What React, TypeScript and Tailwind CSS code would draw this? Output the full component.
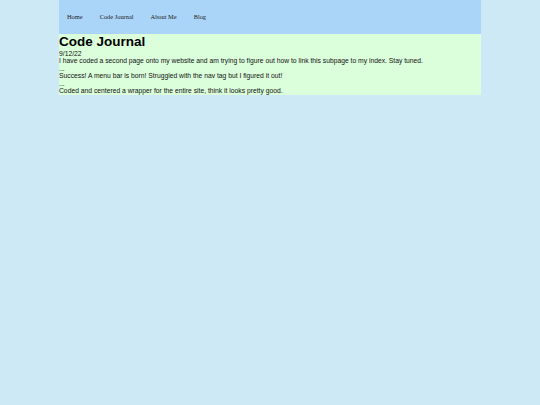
export default function App() {
  const navItems = ["Home", "Code Journal", "About Me", "Blog"];

  return (
    <div className="min-h-[405px] w-full bg-[#cde9f6]">
      <div className="mx-auto w-[422px]">
        {/* nav bar */}
        <nav className="flex h-[34px] items-center bg-[#aad5f8] pl-[8px] font-['Liberation_Serif',serif] text-[6.4px] text-[#222]">
          <ul className="flex gap-[17px]">
            {navItems.map((item) => (
              <li key={item}>
                <a href="#">{item}</a>
              </li>
            ))}
          </ul>
        </nav>

        {/* journal entries */}
        <main className="bg-[#dbffdb] font-['Liberation_Sans',Arial,sans-serif] text-[6.75px] leading-[7.5px] text-[#111]">
          <h1 className="text-[13.5px] font-bold leading-[15.5px] text-black">Code Journal</h1>
          <p>9/12/22</p>
          <p>I have coded a second page onto my website and am trying to figure out how to link this subpage to my index. Stay tuned.</p>
          <p>...</p>
          <p>Success! A menu bar is born! Struggled with the nav tag but I figured it out!</p>
          <p>...</p>
          <p>Coded and centered a wrapper for the entire site, think it looks pretty good.</p>
        </main>
      </div>
    </div>
  );
}
